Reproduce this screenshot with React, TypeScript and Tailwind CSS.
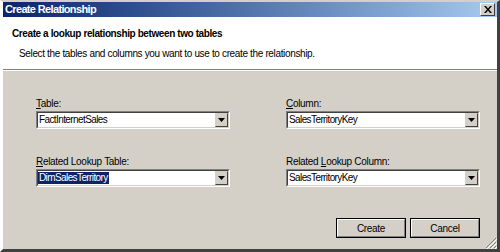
import React from "react";

const font = { fontFamily: '"Liberation Sans", Arial, sans-serif' };

function Combo({ value, selected }: { value: string; selected?: boolean }) {
  return (
    <div className="flex h-[18px] w-[194px] border border-t-[#808080] border-l-[#808080] border-b-white border-r-white">
      <div className="flex flex-1 border border-t-[#404040] border-l-[#404040] border-b-[#d4d0c8] border-r-[#d4d0c8] bg-white">
        <div className="flex flex-1 items-center">
          <span
            className={
              "px-[1px] text-[10px] leading-[12px] tracking-[-0.6px] " +
              (selected ? "bg-[#0a246a] text-white" : "text-black")
            }
          >
            {value}
          </span>
        </div>
        <div className="flex w-[13px] items-center justify-center border border-t-[#d4d0c8] border-l-[#d4d0c8] border-b-[#404040] border-r-[#404040] bg-[#d4d0c8]">
          <svg width="7" height="4" viewBox="0 0 7 4">
            <path d="M0 0h7L3.5 4z" fill="#000" />
          </svg>
        </div>
      </div>
    </div>
  );
}

function Field({
  u,
  rest,
  pre,
  value,
  selected,
}: {
  pre?: string;
  u: string;
  rest: string;
  value: string;
  selected?: boolean;
}) {
  return (
    <div className="flex flex-col">
      <div className="h-[13px] text-[10px] leading-[12px] tracking-[-0.3px] text-black">
        {pre}
        <span className="underline">{u}</span>
        {rest}
      </div>
      <Combo value={value} selected={selected} />
    </div>
  );
}

function Btn({ children }: { children: React.ReactNode }) {
  return (
    <div className="border border-black">
      <div className="flex h-[18px] w-[68px] items-center justify-center border border-t-white border-l-white border-b-[#808080] border-r-[#808080] bg-[#d4d0c8] text-[10px] tracking-[-0.3px] text-black">
        {children}
      </div>
    </div>
  );
}

export default function App() {
  return (
    <div
      className="relative flex h-[252px] w-[500px] flex-col overflow-hidden border-l-[3px] border-r-[3px] border-b-[3px] border-t-[2px] border-l-[#ffffff] border-r-[#404040] border-b-[#404040] border-t-[#d4d0c8] bg-[#d4d0c8]"
      style={font}
    >
      <div className="flex h-[15px] items-center justify-between bg-gradient-to-r from-[#0a246a] to-[#a6caf0] pl-[2px] pr-[2px]">
        <span className="text-[11px] font-bold leading-[13px] tracking-[-0.65px] text-white">
          Create Relationship
        </span>
        <div className="flex h-[13px] w-[15px] items-center justify-center border border-t-white border-l-white border-b-[#404040] border-r-[#404040] bg-[#d4d0c8]">
          <svg width="8" height="7" viewBox="0 0 8 7">
            <path d="M0 0h2l2 2.5L6 0h2L5 3.5 8 7H6L4 4.5 2 7H0l3-3.5z" fill="#000" />
          </svg>
        </div>
      </div>
      <div className="flex h-[52px] flex-col bg-white pl-[9px] pt-[10px]">
        <div className="text-[10px] font-bold leading-[13px] tracking-[-0.4px] text-black">
          Create a lookup relationship between two tables
        </div>
        <div className="mt-[8px] pl-[7px] text-[10px] leading-[12px] tracking-[-0.35px] text-[#000]">
          Select the tables and columns you want to use to create the relationship.
        </div>
      </div>
      <div className="h-px bg-[#808080]" />
      <div className="h-px bg-white" />
      <div className="flex flex-1 flex-col pl-[33px] pr-[17px] pt-[27px]">
        <div className="flex gap-[56px]">
          <Field u="T" rest="able:" value="FactInternetSales" />
          <Field u="C" rest="olumn:" value="SalesTerritoryKey" />
        </div>
        <div className="mt-[27px] flex gap-[56px]">
          <Field u="R" rest="elated Lookup Table:" value="DimSalesTerritory" selected />
          <Field pre="Related " u="L" rest="ookup Column:" value="SalesTerritoryKey" />
        </div>
        <div className="mt-[31px] flex justify-end gap-[4px]">
          <Btn>Create</Btn>
          <Btn>Cancel</Btn>
        </div>
      </div>
      <svg className="absolute bottom-0 right-0" width="12" height="12" viewBox="0 0 12 12">
        <path d="M11 1L1 11M11 5L5 11M11 9L9 11" stroke="#808080" strokeWidth="1" />
        <path d="M12 2L2 12M12 6L6 12M12 10L10 12" stroke="#ffffff" strokeWidth="1" />
      </svg>
    </div>
  );
}
